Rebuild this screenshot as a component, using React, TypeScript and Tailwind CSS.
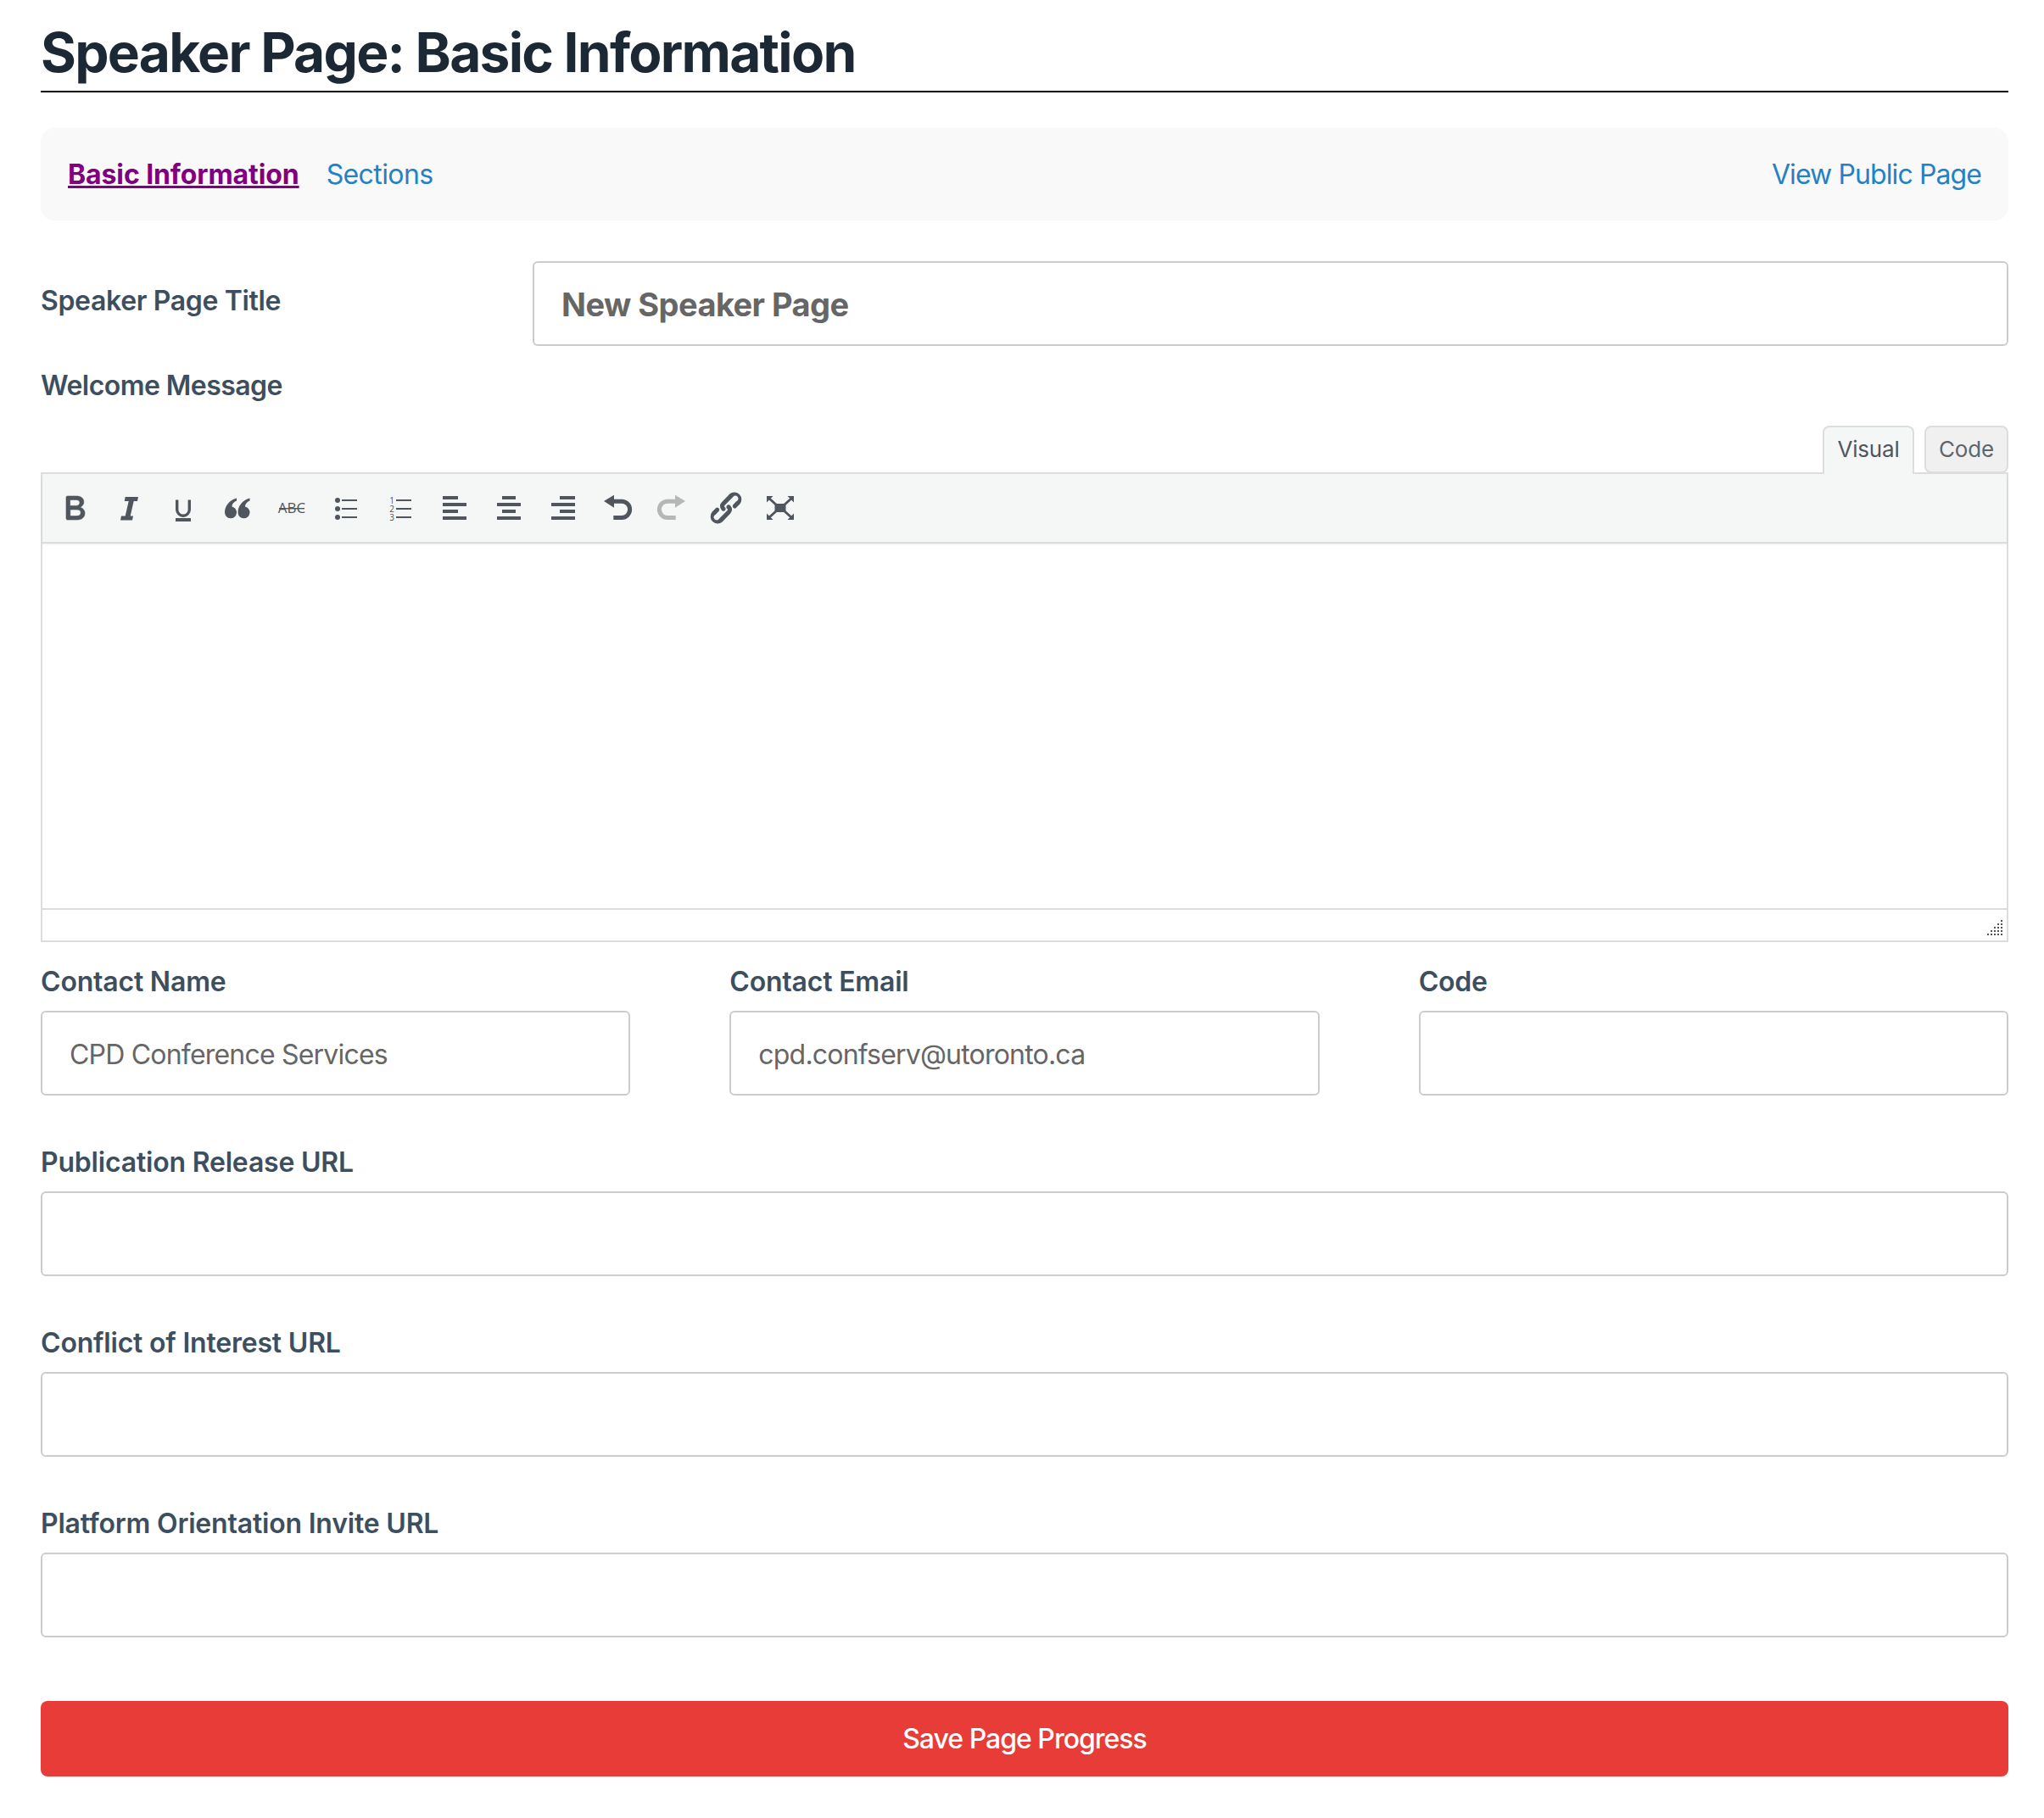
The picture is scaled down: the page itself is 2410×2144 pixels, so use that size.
import { ReactNode } from 'react';

const ink = '#50565e';

function Icon({ children }: { children: ReactNode }) {
  return (
    <button className="w-[64px] h-[80px] flex items-center justify-center shrink-0">
      <svg width="48" height="48" viewBox="0 0 48 48" fill={ink}>{children}</svg>
    </button>
  );
}

function Rows({ rows }: { rows: [number, number][] }) {
  return (
    <>
      {rows.map(([x, w], i) => (
        <rect key={i} x={x} y={10 + i * 8} width={w} height={4} />
      ))}
    </>
  );
}

function Toolbar() {
  return (
    <div className="relative z-[1] h-[80px] pl-[6px] flex items-center bg-[#f5f7f7] shadow-[0_2px_0_0_#dddddd,0_3px_2px_0_rgba(0,0,0,0.08)]">
      <Icon>
        <path transform="scale(2)" d="M7.8 19c-.3 0-.5 0-.6-.2l-.2-.5V5.7c0-.2 0-.4.2-.5l.6-.2h5c1.5 0 2.7.3 3.5 1 .7.6 1.1 1.4 1.1 2.5a3 3 0 0 1-.6 1.9c-.4.6-1 1-1.6 1.2.4.1.9.3 1.3.6s.8.7 1 1.2c.4.4.5 1 .5 1.6 0 1.3-.4 2.3-1.3 3-.8.7-2.1 1-3.8 1H7.8zm5-8.3c.6 0 1.2-.1 1.6-.5.4-.3.6-.7.6-1.3 0-1.1-.8-1.7-2.3-1.7H9.3v3.5h3.4zm.5 6c.7 0 1.3-.1 1.7-.4.4-.4.6-.9.6-1.5s-.2-1-.7-1.4c-.4-.3-1-.4-2-.4H9.4v3.8h4z" stroke={ink} strokeWidth="0.3" />
      </Icon>
      <Icon>
        <polygon points="19.7,11 35,11 34,16 29.7,16 25.7,33.5 29,33.5 28,38.5 14,38.5 15,33.5 19.7,33.5 23.7,16 18.7,16" />
      </Icon>
      <Icon>
        <path d="M16.7 14.5V26a7.3 7.3 0 0 0 14.6 0V14.5" fill="none" stroke={ink} strokeWidth="3.4" />
        <rect x="15" y="36" width="18" height="4" />
      </Icon>
      <Icon>
        <path d="M23 12.5C14.5 15 9 21.5 9 29.5a7 7 0 1 0 8.5-7c0-3 2-5.5 5.5-7Z" />
        <path d="M38.5 12.5C30 15 24.5 21.5 24.5 29.5a7 7 0 1 0 8.5-7c0-3 2-5.5 5.5-7Z" />
      </Icon>
      <Icon>
        <text x="24" y="30" textAnchor="middle" fontSize="17" fontFamily="'Open Sans', sans-serif">ABC</text>
        <rect x="9" y="24" width="30" height="1.4" />
      </Icon>
      <Icon>
        <circle cx="14" cy="15" r="3" />
        <circle cx="14" cy="25" r="3" />
        <circle cx="14" cy="35" r="3" />
        <rect x="19" y="14" width="18" height="2" />
        <rect x="19" y="24" width="18" height="2" />
        <rect x="19" y="34" width="18" height="2" />
      </Icon>
      <Icon>
        <text x="14" y="19" textAnchor="middle" fontSize="10" fontFamily="'Open Sans', sans-serif">1</text>
        <text x="14" y="29" textAnchor="middle" fontSize="10" fontFamily="'Open Sans', sans-serif">2</text>
        <text x="14" y="39" textAnchor="middle" fontSize="10" fontFamily="'Open Sans', sans-serif">3</text>
        <rect x="19" y="14" width="18" height="2" />
        <rect x="19" y="24" width="18" height="2" />
        <rect x="19" y="34" width="18" height="2" />
      </Icon>
      <Icon>
        <Rows rows={[[10, 18], [10, 28], [10, 18], [10, 28]]} />
      </Icon>
      <Icon>
        <Rows rows={[[16, 16], [10, 28], [16, 16], [10, 28]]} />
      </Icon>
      <Icon>
        <Rows rows={[[20, 18], [10, 28], [20, 18], [10, 28]]} />
      </Icon>
      <Icon>
        <polygon points="8,16 20,8.7 20,23.7" />
        <path d="M19 16.2H29a9.65 9.65 0 0 1 0 19.3H19.3" fill="none" stroke={ink} strokeWidth="5" />
      </Icon>
      <Icon>
        <polygon points="40,16 28,8.7 28,23.7" fill="#b4b6b8" />
        <path d="M29 16.2H19a9.65 9.65 0 0 0 0 19.3H28.7" fill="none" stroke="#b4b6b8" strokeWidth="5" />
      </Icon>
      <Icon>
        <path transform="scale(2)" d="M6.2 12.3a1 1 0 0 1 1.4 1.4l-2 2a2 2 0 1 0 2.6 2.8l4.8-4.8a1 1 0 0 0 0-1.4 1 1 0 1 1 1.4-1.3 2.9 2.9 0 0 1 0 4L9.6 20a3.9 3.9 0 0 1-5.5-5.5l2-2Zm11.6-.6a1 1 0 0 1-1.4-1.4l2-2a2 2 0 1 0-2.6-2.8L11 10.3a1 1 0 0 0 0 1.4 1 1 0 1 1-1.4 1.3 2.9 2.9 0 0 1 0-4L14.4 4a3.9 3.9 0 0 1 5.5 5.5l-2 2Z" stroke={ink} strokeWidth="0.6" />
      </Icon>
      <Icon>
        <rect x="17.5" y="19" width="13" height="10" />
        <polygon points="8,10 15.5,10 8,17.5" />
        <polygon points="40,10 32.5,10 40,17.5" />
        <polygon points="8,38 15.5,38 8,30.5" />
        <polygon points="40,38 32.5,38 40,30.5" />
        <path d="M10 12 20 21M38 12 28 21M10 36 20 27M38 36 28 27" stroke={ink} strokeWidth="3" fill="none" />
      </Icon>
    </div>
  );
}

function ResizeHandle() {
  const dots: [number, number][] = [];
  for (let r = 0; r < 5; r++) {
    for (let c = 4 - r; c < 5; c++) dots.push([c * 4, r * 4]);
  }
  return (
    <svg width="18" height="18" viewBox="0 0 18 18" fill="#555">
      {dots.map(([x, y]) => (
        <rect key={`${x}-${y}`} x={x} y={y} width="2" height="2" />
      ))}
    </svg>
  );
}

function Editor() {
  return (
    <div className="border-2 border-[#dddddd] h-[554px] flex flex-col">
      <Toolbar />
      <div className="flex-1 bg-white" />
      <div className="h-[38px] pt-[6px] border-t-2 border-[#dddddd] flex items-center justify-end pr-[5px]">
        <ResizeHandle />
      </div>
    </div>
  );
}

function Field({ label, value, className }: { label: string; value?: string; className?: string }) {
  return (
    <div className={className}>
      <label className="block text-[32px] leading-[40px] font-semibold tracking-[-0.2px] text-[#3d4f5f]">{label}</label>
      <input
        readOnly
        value={value ?? ''}
        className="mt-[14px] block w-full h-[100px] px-[32px] pt-[2px] border-2 border-[#cccccc] rounded-[6px] bg-white text-[32px] tracking-[-0.8px] text-[#666666] outline-none"
      />
    </div>
  );
}

export default function App() {
  return (
    <div className="pl-[48px] pr-[42px] pb-[49px] bg-white font-['Inter',sans-serif]">
      <h1 className="pt-[24px] pb-[7px] text-[64px] leading-[76px] font-bold tracking-[-1.75px] text-[#1c2833] border-b-2 border-black">
        Speaker Page: Basic Information
      </h1>

      <nav className="mt-[42px] h-[109px] px-[32px] flex items-center gap-[32px] bg-[#f9f9f9] rounded-[16px] text-[32px] tracking-[-0.6px] text-[#2481c4]">
        <a className="font-bold tracking-[-0.1px] text-[#800080] underline">Basic Information</a>
        <a>Sections</a>
        <a className="ml-auto tracking-[-0.9px]">View Public Page</a>
      </nav>

      <div className="mt-[48px] flex items-start">
        <label className="w-[580px] shrink-0 pt-[27px] text-[32px] leading-[40px] font-semibold tracking-[-0.35px] text-[#3d4f5f]">Speaker Page Title</label>
        <input
          readOnly
          value="New Speaker Page"
          className="flex-1 h-[100px] px-[32px] pt-[2px] border-2 border-[#cccccc] rounded-[6px] text-[38px] font-bold tracking-[-0.55px] text-[#666666] outline-none"
        />
      </div>

      <div className="mt-[27px] text-[32px] leading-[40px] font-semibold tracking-[-0.55px] text-[#3d4f5f]">Welcome Message</div>

      <div className="mt-[27px] flex justify-end gap-[12px] text-[26px] tracking-[-0.2px] text-[#50565e] relative z-[2] -mb-[2px]">
        <button className="w-[108px] h-[57px] pb-[4px] border-2 border-b-0 border-[#dddddd] rounded-t-[8px] bg-[#f5f7f7]">Visual</button>
        <button className="w-[99px] h-[56px] pb-[2px] border-2 border-[#dddddd] rounded-[8px] bg-[#f0f0f0] text-[#5f656d]">Code</button>
      </div>

      <Editor />

      <div className="mt-[27px] grid grid-cols-3 gap-x-[117px]">
        <Field label="Contact Name" value="CPD Conference Services" />
        <Field label="Contact Email" value="cpd.confserv@utoronto.ca" />
        <Field label="Code" />
      </div>

      <Field className="mt-[59px]" label="Publication Release URL" />
      <Field className="mt-[59px]" label="Conflict of Interest URL" />
      <Field className="mt-[59px]" label="Platform Orientation Invite URL" />

      <button className="mt-[75px] block w-full h-[89px] rounded-[8px] bg-[#e73c37] text-[32px] font-medium tracking-[-1px] text-white">
        Save Page Progress
      </button>
    </div>
  );
}
